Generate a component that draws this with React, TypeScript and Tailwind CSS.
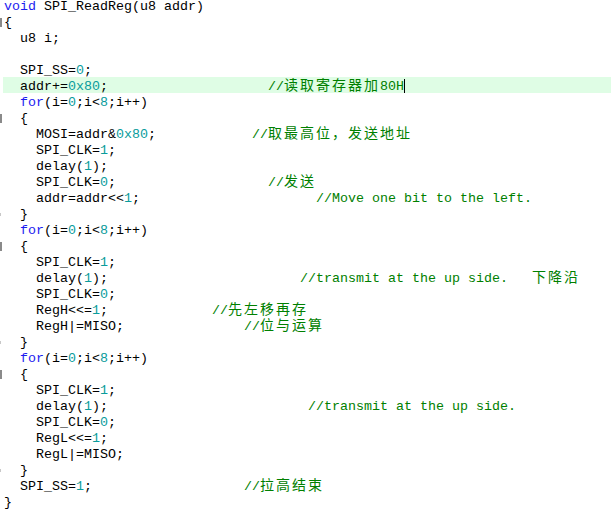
import React from "react";

type Line = { code: string; col?: number; comment?: string };

const lines: Line[] = [
  { code: "void SPI_ReadReg(u8 addr)" },
  { code: "{" },
  { code: "  u8 i;" },
  { code: "" },
  { code: "  SPI_SS=0;" },
  { code: "  addr+=0x80;", col: 33, comment: "//读取寄存器加80H" },
  { code: "  for(i=0;i<8;i++)" },
  { code: "  {" },
  { code: "    MOSI=addr&0x80;", col: 31, comment: "//取最高位，发送地址" },
  { code: "    SPI_CLK=1;" },
  { code: "    delay(1);" },
  { code: "    SPI_CLK=0;", col: 33, comment: "//发送" },
  { code: "    addr=addr<<1;", col: 39, comment: "//Move one bit to the left." },
  { code: "  }" },
  { code: "  for(i=0;i<8;i++)" },
  { code: "  {" },
  { code: "    SPI_CLK=1;" },
  { code: "    delay(1);", col: 37, comment: "//transmit at the up side.   下降沿" },
  { code: "    SPI_CLK=0;" },
  { code: "    RegH<<=1;", col: 26, comment: "//先左移再存" },
  { code: "    RegH|=MISO;", col: 30, comment: "//位与运算" },
  { code: "  }" },
  { code: "  for(i=0;i<8;i++)" },
  { code: "  {" },
  { code: "    SPI_CLK=1;" },
  { code: "    delay(1);", col: 38, comment: "//transmit at the up side." },
  { code: "    SPI_CLK=0;" },
  { code: "    RegL<<=1;" },
  { code: "    RegL|=MISO;" },
  { code: "  }" },
  { code: "  SPI_SS=1;", col: 30, comment: "//拉高结束" },
  { code: "}" },
];

const openMarks = [1, 7, 15, 23];
const closeMarks = [13, 21, 29];
const CURRENT = 5;

function Code({ text }: { text: string }) {
  const parts = text.split(/(\b0x[0-9a-fA-F]+\b|\b\d+\b|\bvoid\b|\bfor\b)/);
  return (
    <>
      {parts.map((p, i) => {
        if (p === "void" || p === "for")
          return (
            <span key={i} className="text-[#1c1cf0]">
              {p}
            </span>
          );
        if (/^(0x[0-9a-fA-F]+|\d+)$/.test(p))
          return (
            <span key={i} className="text-[#0a9c9c]">
              {p}
            </span>
          );
        return <span key={i}>{p}</span>;
      })}
    </>
  );
}

function Comment({ text }: { text: string }) {
  const parts = text.split(/([\u3000-\u9fff\uff00-\uffef]+)/);
  return (
    <span className="text-[#008000]">
      {parts.map((p, i) =>
        /[\u3000-\u9fff\uff00-\uffef]/.test(p) ? (
          <span
            key={i}
            className="font-['Noto_Sans_CJK_SC',sans-serif] text-[14px] leading-[8px] tracking-[2px]"
          >
            {p}
          </span>
        ) : (
          <span key={i}>{p}</span>
        )
      )}
    </span>
  );
}

export default function App() {
  return (
    <div className="w-[611px] h-[524px] bg-white overflow-hidden">
      <div className="-mt-[3px] font-['Liberation_Mono','Courier_New',monospace] text-[13.33px] leading-[16px] text-black">
        {lines.map((line, idx) => {
          const pad =
            line.col !== undefined ? " ".repeat(Math.max(1, line.col - line.code.length)) : "";
          return (
            <div key={idx} className="flex h-[16px]">
              {/* gutter */}
              <div className="relative w-[3px] shrink-0">
                {openMarks.includes(idx) && (
                  <div className="absolute left-0 top-[5px] w-[2px] h-[9px] bg-[#8a8a8a]" />
                )}
                {closeMarks.includes(idx) && (
                  <div className="absolute left-0 top-[8px] w-px h-[3px] bg-[#c8c8c8]" />
                )}
              </div>
              <div
                className={`flex-1 h-[16px] pl-px pt-[2px] whitespace-pre ${
                  idx === CURRENT ? "bg-[#dffde5]" : ""
                }`}
              >
                <Code text={line.code} />
                {line.comment && (
                  <>
                    {pad}
                    <Comment text={line.comment} />
                  </>
                )}
                {idx === CURRENT && (
                  <span className="inline-block w-px h-[14px] align-[-3px] bg-black" />
                )}
              </div>
            </div>
          );
        })}
      </div>
    </div>
  );
}
